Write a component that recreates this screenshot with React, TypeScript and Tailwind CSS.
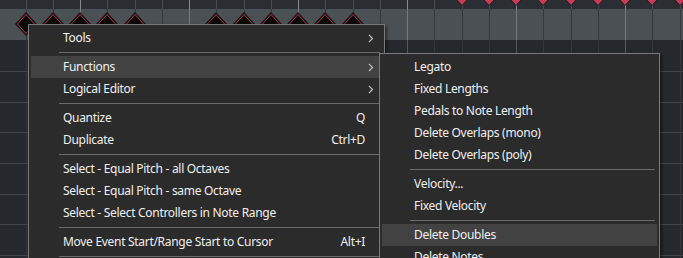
import React from "react";

const font = { fontFamily: '"Noto Sans", "Segoe UI", sans-serif' };

function Background() {
  const xs = Array.from({ length: 25 }, (_, k) => 25.5 + 27.25 * k);
  const ys = Array.from({ length: 7 }, (_, i) => 71 + 30.67 * i);
  const lane = [0, 1, 2, 3, 4, 7, 8, 9, 10, 11, 12];
  const top = [16, 17, 18, 19, 20, 21, 22, 23, 24];
  return (
    <svg width="683" height="258" className="block">
      <rect x="0" y="0" width="683" height="9" fill="#2a2e32" />
      <rect x="0" y="9" width="683" height="31" fill="#4b5054" />
      <rect x="0" y="40" width="683" height="218" fill="#25292d" />
      {ys.map((y, i) => (
        <line key={"h" + i} x1="0" x2="683" y1={Math.round(y) + 0.5} y2={Math.round(y) + 0.5} stroke="#43474b" />
      ))}
      {xs.map((x, k) => {
        const bright = k % 4 === 2;
        const px = Math.round(x) + 0.5;
        return (
          <g key={"v" + k}>
            <line x1={px} x2={px} y1="0" y2="9" stroke={bright ? "#868a8e" : "#484c50"} />
            <line x1={px} x2={px} y1="9" y2="40" stroke={bright ? "#777b7f" : "#36393c"} />
            <line x1={px} x2={px} y1="40" y2="258" stroke={bright ? "#55595d" : "#33373b"} />
          </g>
        );
      })}
      {lane.map((k) => {
        const x = Math.round(xs[k]);
        return (
          <g key={"d" + k}>
            <polygon points={`${x},12.5 ${x + 10.5},24 ${x},35.5 ${x - 10.5},24`} fill="#0b0b0c" stroke="#1a1a1c" />
            <polygon points={`${x},14.5 ${x + 8.5},24 ${x},33.5 ${x - 8.5},24`} fill="#080808" stroke="#c2354f" strokeWidth="1" />
          </g>
        );
      })}
      {top.map((k) => {
        const x = Math.round(xs[k]);
        return (
          <polygon key={"t" + k} points={`${x},-15 ${x + 9.5},-5 ${x},5.5 ${x - 9.5},-5`} fill="#c63b55" stroke="#2a1c20" />
        );
      })}
    </svg>
  );
}

function Chevron() {
  return (
    <svg width="6" height="9" viewBox="0 0 6 9" className="block">
      <polyline points="1,1 4.5,4.5 1,8" fill="none" stroke="#bdbdbd" strokeWidth="1.2" />
    </svg>
  );
}

type Item =
  | { sep: true }
  | { label: string; shortcut?: string; sub?: boolean; active?: boolean };

function Menu({ items, className }: { items: Item[]; className: string }) {
  return (
    <div
      className={"absolute border border-[#7a7a7a] bg-[#2b2b2b] p-[2px] shadow-[2px_2px_3px_rgba(0,0,0,0.45)] " + className}
      style={font}
    >
      {items.map((it, i) =>
        "sep" in it ? (
          <div key={i} className="h-[7px] flex items-center pl-[28px] pr-[2px]">
            <div className="h-px w-full bg-[#6b6b6b]" />
          </div>
        ) : (
          <div
            key={i}
            className={
              "h-[22px] flex items-center pl-[32px] text-[12px] tracking-[-0.3px] text-[#f0f0f0] " +
              (it.active ? "bg-[#424242]" : "")
            }
          >
            <span className="flex-1 whitespace-nowrap">{it.label}</span>
            {it.shortcut && <span className="pr-[17px] whitespace-nowrap">{it.shortcut}</span>}
            {it.sub && (
              <span className="pr-[8px]">
                <Chevron />
              </span>
            )}
          </div>
        )
      )}
    </div>
  );
}

export default function App() {
  const main: Item[] = [
    { label: "Tools", sub: true },
    { sep: true },
    { label: "Functions", sub: true, active: true },
    { label: "Logical Editor", sub: true },
    { sep: true },
    { label: "Quantize", shortcut: "Q" },
    { label: "Duplicate", shortcut: "Ctrl+D" },
    { sep: true },
    { label: "Select - Equal Pitch - all Octaves" },
    { label: "Select - Equal Pitch - same Octave" },
    { label: "Select - Select Controllers in Note Range" },
    { sep: true },
    { label: "Move Event Start/Range Start to Cursor", shortcut: "Alt+I" },
    { sep: true },
  ];
  const sub: Item[] = [
    { label: "Legato" },
    { label: "Fixed Lengths" },
    { label: "Pedals to Note Length" },
    { label: "Delete Overlaps (mono)" },
    { label: "Delete Overlaps (poly)" },
    { sep: true },
    { label: "Velocity..." },
    { label: "Fixed Velocity" },
    { sep: true },
    { label: "Delete Doubles", active: true },
    { label: "Delete Notes" },
  ];
  return (
    <div className="relative w-[683px] h-[258px] overflow-hidden bg-[#25292d]">
      <Background />
      <Menu items={main} className="left-[28px] top-[24px] w-[357px] pb-[10px]" />
      <Menu items={sub} className="left-[379px] top-[53px] w-[281px]" />
    </div>
  );
}
